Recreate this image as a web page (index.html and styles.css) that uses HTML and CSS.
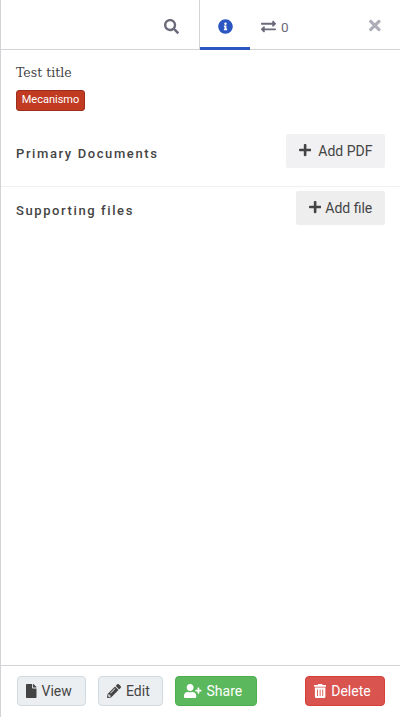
FILE: index.html
```html
<!DOCTYPE html>
<html lang="en">
<head>
<meta charset="utf-8">
<title>Test title</title>
<link rel="stylesheet" href="styles.css">
</head>
<body>
<aside class="panel">
  <header class="tabs">
    <div class="tab search"><svg class="icon" viewBox="0 0 512 512"><path d="M505 442.7L405.3 343c-4.5-4.5-10.6-7-17-7H372c27.6-35.3 44-79.7 44-128C416 93.1 322.9 0 208 0S0 93.1 0 208s93.1 208 208 208c48.3 0 92.7-16.4 128-44v16.3c0 6.4 2.5 12.5 7 17l99.7 99.7c9.4 9.4 24.6 9.4 33.9 0l28.3-28.3c9.4-9.4 9.4-24.6.1-34zM208 336c-70.7 0-128-57.2-128-128 0-70.7 57.2-128 128-128 70.7 0 128 57.2 128 128 0 70.7-57.2 128-128 128z"/></svg></div>
    <div class="tab info"><svg class="icon" viewBox="0 0 512 512"><path d="M256 8C119.043 8 8 119.083 8 256c0 136.997 111.043 248 248 248s248-111.003 248-248C504 119.083 392.957 8 256 8zm0 110c23.196 0 42 18.804 42 42s-18.804 42-42 42-42-18.804-42-42 18.804-42 42-42zm56 254c0 6.627-5.373 12-12 12h-88c-6.627 0-12-5.373-12-12v-24c0-6.627 5.373-12 12-12h12v-64h-12c-6.627 0-12-5.373-12-12v-24c0-6.627 5.373-12 12-12h64c6.627 0 12 5.373 12 12v100h12c6.627 0 12 5.373 12 12v24z"/></svg></div>
    <div class="tab relations"><svg class="icon" viewBox="0 0 512 512"><path d="M0 168v-16c0-13.255 10.745-24 24-24h360V80c0-21.367 25.899-32.042 40.971-16.971l80 80c9.372 9.373 9.372 24.569 0 33.941l-80 80C409.956 271.982 384 261.456 384 240v-48H24c-13.255 0-24-10.745-24-24zm488 152H128v-48c0-21.314-25.862-32.08-40.971-16.971l-80 80c-9.372 9.373-9.372 24.569 0 33.941l80 80C102.057 463.997 128 453.437 128 432v-48h360c13.255 0 24-10.745 24-24v-16c0-13.255-10.745-24-24-24z"/></svg><span>0</span></div>
    <div class="close"><svg class="icon" viewBox="0 0 352 512"><path d="M242.72 256l100.07-100.07c12.28-12.28 12.28-32.19 0-44.48l-22.24-22.24c-12.28-12.28-32.19-12.28-44.48 0L176 189.28 75.93 89.21c-12.28-12.28-32.19-12.28-44.48 0L9.21 111.45c-12.28 12.28-12.28 32.19 0 44.48L109.28 256 9.21 356.07c-12.28 12.28-12.28 32.19 0 44.48l22.24 22.24c12.28 12.28 32.2 12.28 44.48 0L176 322.72l100.07 100.07c12.28 12.28 32.2 12.28 44.48 0l22.24-22.24c12.28-12.28 12.28-32.19 0-44.48L242.72 256z"/></svg></div>
  </header>
  <main class="content">
    <div class="summary">
      <h1 class="title">Test title</h1>
      <span class="badge">Mecanismo</span>
    </div>
    <section class="files primary">
      <h2>Primary Documents</h2>
      <button class="add pdf"><svg class="icon" viewBox="0 0 448 512"><path d="M416 208H272V64c0-17.67-14.33-32-32-32h-32c-17.67 0-32 14.33-32 32v144H32c-17.67 0-32 14.33-32 32v32c0 17.67 14.33 32 32 32h144v144c0 17.67 14.33 32 32 32h32c17.67 0 32-14.33 32-32V304h144c17.67 0 32-14.33 32-32v-32c0-17.67-14.33-32-32-32z"/></svg><span>Add PDF</span></button>
    </section>
    <section class="files supporting">
      <h2>Supporting files</h2>
      <button class="add file"><svg class="icon" viewBox="0 0 448 512"><path d="M416 208H272V64c0-17.67-14.33-32-32-32h-32c-17.67 0-32 14.33-32 32v144H32c-17.67 0-32 14.33-32 32v32c0 17.67 14.33 32 32 32h144v144c0 17.67 14.33 32 32 32h32c17.67 0 32-14.33 32-32V304h144c17.67 0 32-14.33 32-32v-32c0-17.67-14.33-32-32-32z"/></svg><span>Add file</span></button>
    </section>
  </main>
  <footer class="actions">
    <button class="btn view"><svg class="icon" viewBox="0 0 384 512"><path d="M224 136V0H24C10.7 0 0 10.7 0 24v464c0 13.3 10.7 24 24 24h336c13.3 0 24-10.7 24-24V160H248c-13.2 0-24-10.8-24-24zm160-14.1v6.1H256V0h6.1c6.4 0 12.5 2.5 17 7l97.9 98c4.5 4.5 7 10.6 7 16.9z"/></svg><span>View</span></button>
    <button class="btn edit"><svg class="icon" viewBox="0 0 512 512"><path d="M497.9 142.1l-46.1 46.1c-4.7 4.7-12.3 4.7-17 0l-111-111c-4.7-4.7-4.7-12.3 0-17l46.1-46.1c18.7-18.7 49.1-18.7 67.9 0l60.1 60.1c18.8 18.7 18.8 49.1 0 67.9zM284.2 99.8L21.6 362.4.4 483.9c-2.9 16.4 11.4 30.6 27.8 27.8l121.5-21.3 262.6-262.6c4.7-4.7 4.7-12.3 0-17l-111-111c-4.8-4.7-12.4-4.7-17.1 0zM124.1 339.9c-5.5-5.5-5.5-14.3 0-19.8l154-154c5.5-5.5 14.3-5.5 19.8 0s5.5 14.3 0 19.8l-154 154c-5.5 5.5-14.3 5.5-19.8 0zM88 424h48v36.3l-64.5 11.3-31.1-31.1L51.7 376H88v48z"/></svg><span>Edit</span></button>
    <button class="btn share"><svg class="icon" viewBox="0 0 640 512"><path d="M624 208h-64v-64c0-8.800-7.200-16-16-16h-32c-8.800 0-16 7.200-16 16v64h-64c-8.800 0-16 7.200-16 16v32c0 8.800 7.200 16 16 16h64v64c0 8.800 7.200 16 16 16h32c8.800 0 16-7.200 16-16v-64h64c8.800 0 16-7.200 16-16v-32c0-8.800-7.200-16-16-16zM224 256c70.700 0 128-57.300 128-128S294.700 0 224 0 96 57.300 96 128s57.300 128 128 128zm89.600 32h-16.700c-22.200 10.200-46.900 16-72.900 16s-50.600-5.800-72.900-16h-16.700C60.200 288 0 348.200 0 422.400V464c0 26.500 21.500 48 48 48h352c26.500 0 48-21.500 48-48v-41.600c0-74.200-60.200-134.400-134.400-134.400z"/></svg><span>Share</span></button>
    <button class="btn delete"><svg class="icon" viewBox="0 0 448 512"><path d="M32 464a48 48 0 0 0 48 48h288a48 48 0 0 0 48-48V128H32zm272-256a16 16 0 0 1 32 0v224a16 16 0 0 1-32 0zm-96 0a16 16 0 0 1 32 0v224a16 16 0 0 1-32 0zm-96 0a16 16 0 0 1 32 0v224a16 16 0 0 1-32 0zM432 32H312l-9.400-18.700A24 24 0 0 0 281.100 0H166.800a23.720 23.720 0 0 0-21.400 13.300L136 32H16A16 16 0 0 0 0 48v32a16 16 0 0 0 16 16h416a16 16 0 0 0 16-16V48a16 16 0 0 0-16-16z"/></svg><span>Delete</span></button>
  </footer>
</aside>
</body>
</html>
```
FILE: styles.css
```css
* { box-sizing: border-box; }
body { margin: 0; background: #fff; }
.panel {
  display: flex;
  flex-direction: column;
  height: 717px;
  border-left: 1px solid #d2d2d7;
  color: #444;
  font: 14px/20px Roboto, sans-serif;
}
.icon { display: block; height: 14px; flex: none; fill: currentColor; }
.tabs {
  display: flex;
  height: 50px;
  border-bottom: 1px solid #d4d4d8;
  color: #6b6a7b;
}
.tab { display: flex; align-items: center; height: 50px; }
.tabs .icon { height: 15px; }
.search { width: 199px; justify-content: flex-end; padding: 3px 20px 0 0; border-right: 1px solid #d4d4d8; }
.info { width: 50px; justify-content: center; padding-top: 5px; border-bottom: 3px solid #2b56c1; color: #2b56c1; }
.relations { padding: 4px 0 0 11px; gap: 5px; font-size: 13.5px; }
.relations .icon { margin-top: -1px; }
.close { margin: 17px 19px 0 auto; color: #aeaeb9; }
.close .icon { height: 17px; }
.content { flex: 1; }
.summary { height: 79px; padding: 13px 15px 0; }
.title { margin: 0 0 7px; font: 400 12.5px/20px "Roboto Slab", "DejaVu Serif", serif; letter-spacing: 0; }
.badge {
  display: block;
  width: 69px;
  height: 21px;
  border: 1px solid #9c2e1b;
  border-radius: 3px;
  background: #c03b22;
  color: #fff;
  font-size: 11px;
  line-height: 18px;
  text-align: center;
}
.files { display: flex; justify-content: space-between; align-items: flex-start; padding: 0 15px; }
.primary { height: 58px; padding-top: 5px; border-bottom: 1px solid #f0f0f2; }
.supporting { padding-top: 4px; }
.files h2 { margin: 10px 0 0; font-size: 13px; line-height: 20px; font-weight: 500; letter-spacing: 1.6px; }
button { display: flex; align-items: center; font: 14px/20px Roboto, sans-serif; color: #444; white-space: nowrap; }
.add { height: 34px; padding: 0 0 0 13px; border: 0; border-radius: 2px; background: #f1f1f3; }
.add .icon { margin-top: -2px; }
.pdf { gap: 7px; width: 99px; }
.file { gap: 4px; width: 89px; background: #eee; }
.actions { display: flex; height: 52px; padding: 10px 15px 0 16px; border-top: 1px solid #d4d4d8; }
.btn { height: 30px; padding: 0 0 0 8px; gap: 5px; border: 1px solid #d0dae0; border-radius: 4px; background: #eceff1; }
.view { width: 69px; margin-right: 12px; }
.edit { width: 65px; margin-right: 12px; }
.share { width: 82px; border-color: #4cae4c; background: #5cb85c; color: #fff; }
.delete { width: 80px; margin-left: auto; border-color: #d43f3a; background: #d9534f; color: #fff; }
```
